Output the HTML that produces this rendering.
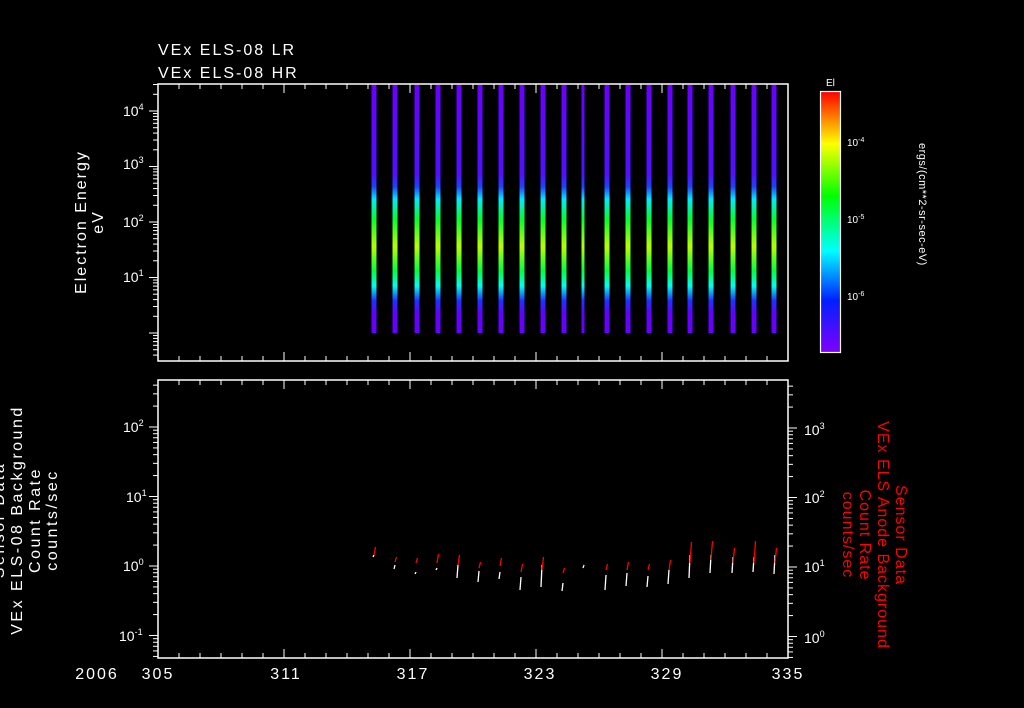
<!DOCTYPE html>
<html><head><meta charset="utf-8"><style>
html,body{margin:0;padding:0;background:#000;}
svg{display:block;font-family:"Liberation Sans",sans-serif;}
</style></head><body>
<svg id="s" width="1024" height="708" viewBox="0 0 1024 708" xmlns="http://www.w3.org/2000/svg">
<defs>
<linearGradient id="st" x1="0" y1="0" x2="0" y2="1">
<stop offset="0" stop-color="#6a00ff"/>
<stop offset="0.36" stop-color="#5010ff"/>
<stop offset="0.41" stop-color="#2040ff"/>
<stop offset="0.46" stop-color="#00e8ff"/>
<stop offset="0.54" stop-color="#00ff30"/>
<stop offset="0.65" stop-color="#b8ff00"/>
<stop offset="0.75" stop-color="#00ff40"/>
<stop offset="0.81" stop-color="#00ffee"/>
<stop offset="0.87" stop-color="#2030ff"/>
<stop offset="0.92" stop-color="#6000ff"/>
<stop offset="1" stop-color="#6a00ff"/>
</linearGradient>
<linearGradient id="cb" x1="0" y1="0" x2="0" y2="1">
<stop offset="0" stop-color="#ff0000"/>
<stop offset="0.2" stop-color="#ffff00"/>
<stop offset="0.4" stop-color="#00ff00"/>
<stop offset="0.61" stop-color="#00ffff"/>
<stop offset="0.8" stop-color="#0020ff"/>
<stop offset="1" stop-color="#8000ff"/>
</linearGradient>
</defs>
<g fill="#fff" font-size="16" letter-spacing="2">
<text x="158" y="55">VEx ELS-08 LR</text>
<text x="158" y="78">VEx ELS-08 HR</text>
</g>
<g id="stripes"></g>
<g stroke="#fff" stroke-width="1.5" fill="none">
<rect x="158" y="84" width="630" height="277"/>
<rect x="158" y="380" width="630" height="278"/>
<rect x="820.5" y="91.5" width="20" height="261" fill="url(#cb)" stroke-width="1.2"/>
</g>
<g id="ticks" stroke="#fff" stroke-width="1"></g>
<g fill="#fff" font-size="14" id="lbl">
<text x="123" y="116">10<tspan font-size="9" dy="-6">4</tspan></text>
<text x="123" y="169">10<tspan font-size="9" dy="-6">3</tspan></text>
<text x="123" y="227">10<tspan font-size="9" dy="-6">2</tspan></text>
<text x="123" y="282">10<tspan font-size="9" dy="-6">1</tspan></text>
<text x="123" y="432">10<tspan font-size="9" dy="-6">2</tspan></text>
<text x="126" y="502">10<tspan font-size="9" dy="-6">1</tspan></text>
<text x="123" y="571">10<tspan font-size="9" dy="-6">0</tspan></text>
<text x="119" y="641">10<tspan font-size="9" dy="-6">-1</tspan></text>
<text x="804" y="435">10<tspan font-size="9" dy="-6">3</tspan></text>
<text x="804" y="503">10<tspan font-size="9" dy="-6">2</tspan></text>
<text x="804" y="572">10<tspan font-size="9" dy="-6">1</tspan></text>
<text x="804" y="643">10<tspan font-size="9" dy="-6">0</tspan></text>
</g>
<g fill="#fff" font-size="10">
<text x="847" y="146">10<tspan font-size="7" dy="-4">-4</tspan></text>
<text x="847" y="223">10<tspan font-size="7" dy="-4">-5</tspan></text>
<text x="847" y="300">10<tspan font-size="7" dy="-4">-6</tspan></text>
<text x="826" y="86">El</text>
<text transform="translate(919,143) rotate(90)" font-size="11" letter-spacing="0.5">ergs/(cm**2-sr-sec-eV)</text>
</g>
<g fill="#fff" font-size="16" text-anchor="middle" letter-spacing="2">
<text x="97" y="679">2006</text>
<text x="158" y="679">305</text>
<text x="286" y="679">311</text>
<text x="413" y="679">317</text>
<text x="540" y="679">323</text>
<text x="667" y="679">329</text>
<text x="788" y="679">335</text>
<g transform="translate(0,222) rotate(-90)">
<text x="0" y="86">Electron Energy</text>
<text x="0" y="103">eV</text>
</g>
<g transform="translate(0,520) rotate(-90)" letter-spacing="2.5">
<text x="0" y="4">Sensor Data</text>
<text x="0" y="22">VEx ELS-08 Background</text>
<text x="0" y="40">Count Rate</text>
<text x="0" y="57">counts/sec</text>
</g>
</g>
<g fill="#ff0000" font-size="16" text-anchor="middle" letter-spacing="1" transform="translate(0,535) rotate(90)">
<text x="0" y="-896">Sensor Data</text>
<text x="0" y="-878">VEx ELS Anode Background</text>
<text x="0" y="-860">Count Rate</text>
<text x="0" y="-843">counts/sec</text>
</g>
<g id="data" stroke-width="1.3" fill="none"></g>
</svg>
<script>
var NS="http://www.w3.org/2000/svg";
function el(p,t,a){var e=document.createElementNS(NS,t);for(var k in a)e.setAttribute(k,a[k]);p.appendChild(e);return e;}
var xs=[374,395,417,438,459,480,501,522,543,564,584,607,628,649,670,690,711,733,754,774];
var sg=document.getElementById('stripes');
xs.forEach(function(x,i){el(sg,'rect',{x:x-2.5,y:85,width:(i==10?3:5),height:248,fill:'url(#st)'});});
var tg=document.getElementById('ticks');
function ln(x1,y1,x2,y2){el(tg,'line',{x1:x1,y1:y1,x2:x2,y2:y2});}
for(var d=0;d<=30;d++){var x=158+d*21.0;var maj=(d%6==0);var L=maj?9:5;
 ln(x,84,x,84+L);ln(x,361,x,361-L);ln(x,380,x,380+L);ln(x,658,x,658-L);}
var sp=55.5;
for(var k=-1;k<5;k++){for(var m=1;m<10;m++){var y=333-sp*k-sp*Math.log10(m);
 if(y<84||y>361)continue;var L=(m==1)?9:5;ln(158,y,158-L,y);}}
function logt(base,spc,x,dir,ymin,ymax){for(var k=-3;k<6;k++)for(var m=1;m<10;m++){var y=base-spc*k-spc*Math.log10(m);if(y<ymin||y>ymax)continue;var L=(m==1)?9:5;ln(x,y,x+dir*L,y);}}
logt(566,69.5,158,-1,380,658);
logt(567,69.5,788,1,380,658);
var D=[[374,547,555,555,557],[395,557,562,565,569],[416,558,563,572,574],[437,554,563,568,570],[458,555,565,565,578],[479,562,568,571,582],[500,558,566,572,579],[521,564,572,577,590],[542,557,570,565,587],[563,568,573,583,591],[584,0,0,565,568],[606,564,570,575,590],[627,562,570,573,586],[648,564,570,576,587],[669,560,570,570,584],[690,542,563,555,578],[711,541,560,555,573],[733,548,563,557,573],[754,541,563,557,572],[775,548,563,555,574]];
var dg=document.getElementById('data');
D.forEach(function(r){var x=r[0];
 el(dg,'polyline',{points:(x-1)+','+r[4]+' '+(x)+','+r[3],stroke:'#fff'});
 if(r[1])el(dg,'polyline',{points:(x)+','+r[2]+' '+(x+1.5)+','+r[1],stroke:'#f00'});});
</script>
</body></html>
